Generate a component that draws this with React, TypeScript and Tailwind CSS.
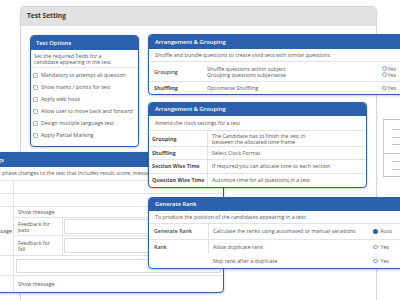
import React from "react";

const Radio = ({ filled }: { filled?: boolean }) => (
  <span
    className={
      filled
        ? "inline-block h-[4.5px] w-[4.5px] rounded-full bg-[#2a60ad]"
        : "inline-block h-[4.5px] w-[4.5px] rounded-full border-[0.6px] border-[#7ea3d8]"
    }
  />
);

const Check = ({ label }: { label: string }) => (
  <div className="flex h-[12px] items-center gap-[3px] pl-[2px]">
    <span className="inline-block h-[5px] w-[5px] rounded-[1px] border-[0.6px] border-[#b5b5b5]" />
    <span>{label}</span>
  </div>
);

const options = [
  "Mandatory to attempt all question",
  "Show marks / points for test",
  "Apply web hook",
  "Allow user to move back and forward",
  "Design multiple language test",
  "Apply Partial Marking",
];

const clockRows = [
  { label: "Shuffling", value: "Select Clock Format", h: "h-[13px]" },
  { label: "Section Wise Time", value: "If required you can allocate time to each section", h: "h-[14px]" },
  { label: "Question Wise Time", value: "Automize time for all questions in a test", h: "h-[13px]" },
];

const App = () => {
  return (
    <div className="relative h-[300px] w-[400px] overflow-hidden bg-white font-['Open_Sans',sans-serif] text-[5.3px] leading-[6.5px] text-[#555]">
      {/* Test Setting panel */}
      <div className="absolute left-[20px] top-[6px] h-[320px] w-[357px] rounded-t-[5px] border border-[#d6d6d6] bg-white shadow-[0_0_3px_rgba(0,0,0,0.08)]">
        <div className="flex h-[19px] items-center rounded-t-[4px] bg-[#e2e2e2] pl-[6px] text-[6.6px] font-bold text-[#333]">
          Test Setting
        </div>
      </div>

      {/* Test Options */}
      <div className="absolute left-[30px] top-[35px] h-[112px] w-[109px] overflow-hidden rounded-[4px] border border-[#2a60ad] bg-white shadow-[0_1px_3px_rgba(0,0,0,0.2)]">
        <div className="flex h-[14px] items-center bg-[#2a60ad] pl-[5px] text-[5.8px] font-semibold text-white">Test Options</div>
        <div className="flex h-[18px] flex-col justify-center border-b border-[#e2e2e2] pl-[3px] leading-[6px]">
          <span>Set the required fields for a</span>
          <span>candidate appearing in the test</span>
        </div>
        <div className="flex flex-col pt-[1px]">
          {options.map((o) => (
            <Check key={o} label={o} />
          ))}
        </div>
      </div>

      {/* Arrangement & Grouping - questions */}
      <div className="absolute left-[148px] top-[34px] h-[61px] w-[262px] overflow-hidden rounded-[4px] border border-[#2a60ad] bg-white shadow-[0_1px_3px_rgba(0,0,0,0.2)]">
        <div className="flex h-[14px] items-center bg-[#2a60ad] pl-[6px] text-[5.8px] font-semibold text-white">Arrangement &amp; Grouping</div>
        <div className="flex h-[13px] items-center border-b border-[#e2e2e2] pl-[6px]">
          Shuffle and bundle questions to create vivid sets with similar questions
        </div>
        <div className="flex h-[20px] border-b border-[#e2e2e2] leading-[6px]">
          <div className="flex w-[56px] items-center pl-[5px] font-semibold text-[#4a4a4a]">Grouping</div>
          <div className="flex flex-1 flex-col justify-center pl-[2px]">
            <span>Shuffle questions within subject</span>
            <span>Grouping questions subjectwise</span>
          </div>
          <div className="flex w-[27px] flex-col justify-center">
            <span className="flex items-center gap-[1px]"><Radio />Yes</span>
            <span className="flex items-center gap-[1px]"><Radio />Yes</span>
          </div>
        </div>
        <div className="flex h-[12px] items-center">
          <div className="w-[56px] pl-[5px] font-bold text-[#4a4a4a]">Shuffling</div>
          <div className="flex-1 pl-[2px]">Optionwise Shuffling</div>
          <div className="flex w-[27px] items-center gap-[1px]"><Radio />Yes</div>
        </div>
      </div>

      {/* document icon */}
      <svg className="absolute left-[383px] top-[119px]" width="20" height="58" viewBox="0 0 20 58">
        <rect x="0.5" y="0.5" width="30" height="57" fill="#fff" stroke="#c9c9c9" />
        <g stroke="#c9c9c9" strokeWidth="1">
          <line x1="9" y1="10.5" x2="20" y2="10.5" />
          <line x1="9" y1="18.5" x2="20" y2="18.5" />
          <line x1="9" y1="25.5" x2="20" y2="25.5" />
          <line x1="0" y1="34.5" x2="20" y2="34.5" />
          <line x1="9" y1="42.5" x2="20" y2="42.5" />
          <line x1="9" y1="50.5" x2="20" y2="50.5" />
        </g>
      </svg>

      {/* Result settings (cut off at left) */}
      <div className="absolute left-[-1px] top-[152px] h-[141px] w-[225px] overflow-hidden rounded-br-[4px] border border-[#2a60ad] bg-white shadow-[0_1px_3px_rgba(0,0,0,0.2)]">
        <div className="flex h-[14px] items-center bg-[#2a60ad] text-[5.8px] font-semibold text-white">
          <div className="flex w-[4px] justify-end overflow-hidden whitespace-nowrap">Result Settings</div>
        </div>
        <div className="flex h-[14px] items-center whitespace-nowrap border-b border-[#e2e2e2] pl-[2px]">
          phase changes to the test that includes result, score, message and feedback
        </div>
        <div className="flex h-[13px] border-b border-[#e2e2e2]">
          <div className="w-[14px] border-r border-[#e2e2e2]" />
        </div>
        <div className="flex h-[13px] border-b border-[#e2e2e2]">
          <div className="w-[14px] border-r border-[#e2e2e2]" />
        </div>
        <div className="flex h-[49px] border-b border-[#e2e2e2]">
          <div className="flex w-[14px] items-center justify-end overflow-hidden whitespace-nowrap border-r border-[#e2e2e2] pr-[1px] text-[#4a4a4a]">
            Message
          </div>
          <div className="flex flex-1 flex-col">
            <div className="flex h-[11px] items-center border-b border-[#e2e2e2] pl-[4px]">Show message</div>
            {["pass", "fail"].map((k, i) => (
              <div key={k} className={"flex h-[19px] " + (i === 0 ? "border-b border-[#e2e2e2]" : "")}>
                <div className="flex w-[49px] flex-col justify-center border-r border-[#e2e2e2] pl-[4px] leading-[6px]">
                  <span>Feedback for</span>
                  <span>{k}</span>
                </div>
                <div className="flex flex-1 items-center px-[1px]">
                  <div className="h-[15px] w-full rounded-[1px] border border-[#dcdcdc]" />
                </div>
              </div>
            ))}
          </div>
        </div>
        <div className="flex h-[20px] border-b border-[#e2e2e2]">
          <div className="w-[14px] border-r border-[#e2e2e2]" />
          <div className="flex flex-1 items-center px-[2px]">
            <div className="h-[14px] w-full rounded-[1px] border border-[#dcdcdc]" />
          </div>
        </div>
        <div className="flex h-[16px]">
          <div className="w-[14px] border-r border-[#e2e2e2]" />
          <div className="flex items-center pl-[4px]">Show message</div>
        </div>
      </div>

      {/* Arrangement & Grouping - clock */}
      <div className="absolute left-[148px] top-[102px] h-[86px] w-[219px] overflow-hidden rounded-[4px] border border-[#2a60ad] bg-white shadow-[0_1px_3px_rgba(0,0,0,0.2)]">
        <div className="flex h-[13px] items-center bg-[#2a60ad] pl-[6px] text-[5.8px] font-semibold text-white">Arrangement &amp; Grouping</div>
        <div className="flex h-[15px] items-center border-b border-[#e2e2e2] pl-[6px]">Amend the clock settings for a test</div>
        <div className="flex h-[16px] border-b border-[#e2e2e2] leading-[6px]">
          <div className="flex w-[59px] items-center border-r border-[#e2e2e2] pl-[3px] font-bold text-[#4a4a4a]">Grouping</div>
          <div className="flex flex-col justify-center pl-[4px]">
            <span>The Candidate has to finish the test in</span>
            <span>between the allocated time frame</span>
          </div>
        </div>
        {clockRows.map((r, i) => (
          <div key={r.label} className={"flex " + r.h + (i < clockRows.length - 1 ? " border-b border-[#e2e2e2]" : "")}>
            <div className="flex w-[59px] items-center border-r border-[#e2e2e2] pl-[3px] font-bold text-[#4a4a4a]">{r.label}</div>
            <div className="flex items-center pl-[4px]">{r.value}</div>
          </div>
        ))}
      </div>

      {/* Generate Rank */}
      <div className="absolute left-[148px] top-[197px] h-[72px] w-[262px] overflow-hidden rounded-[4px] border border-[#2a60ad] bg-white shadow-[0_1px_3px_rgba(0,0,0,0.2)]">
        <div className="flex h-[13px] items-center bg-[#2a60ad] pl-[6px] text-[5.8px] font-semibold text-white">Generate Rank</div>
        <div className="flex h-[13px] items-center border-b border-[#e2e2e2] pl-[6px]">
          To produce the position of the candidates appearing in a test:
        </div>
        <div className="flex h-[16px] border-b border-[#e2e2e2]">
          <div className="flex w-[60px] items-center border-r border-[#e2e2e2] pl-[5px] font-semibold text-[#4a4a4a]">Generate Rank</div>
          <div className="flex flex-1 items-center pl-[4px]">Calculate the ranks using automated or manual variations</div>
          <div className="flex w-[38px] items-center gap-[3px] pl-[2px]"><Radio filled />Auto</div>
        </div>
        <div className="flex h-[28px]">
          <div className="flex h-[14px] w-[60px] items-center border-r border-[#e2e2e2] pl-[5px] font-semibold text-[#4a4a4a]">Rank</div>
          <div className="flex flex-1 flex-col">
            {["Allow duplicate rank", "Skip rank after a duplicate"].map((t) => (
              <div key={t} className="flex h-[14px] items-center">
                <div className="flex-1 pl-[4px]">{t}</div>
                <div className="flex w-[38px] items-center gap-[3px] pl-[2px]"><Radio />Yes</div>
              </div>
            ))}
          </div>
        </div>
      </div>
    </div>
  );
};

export default App;
